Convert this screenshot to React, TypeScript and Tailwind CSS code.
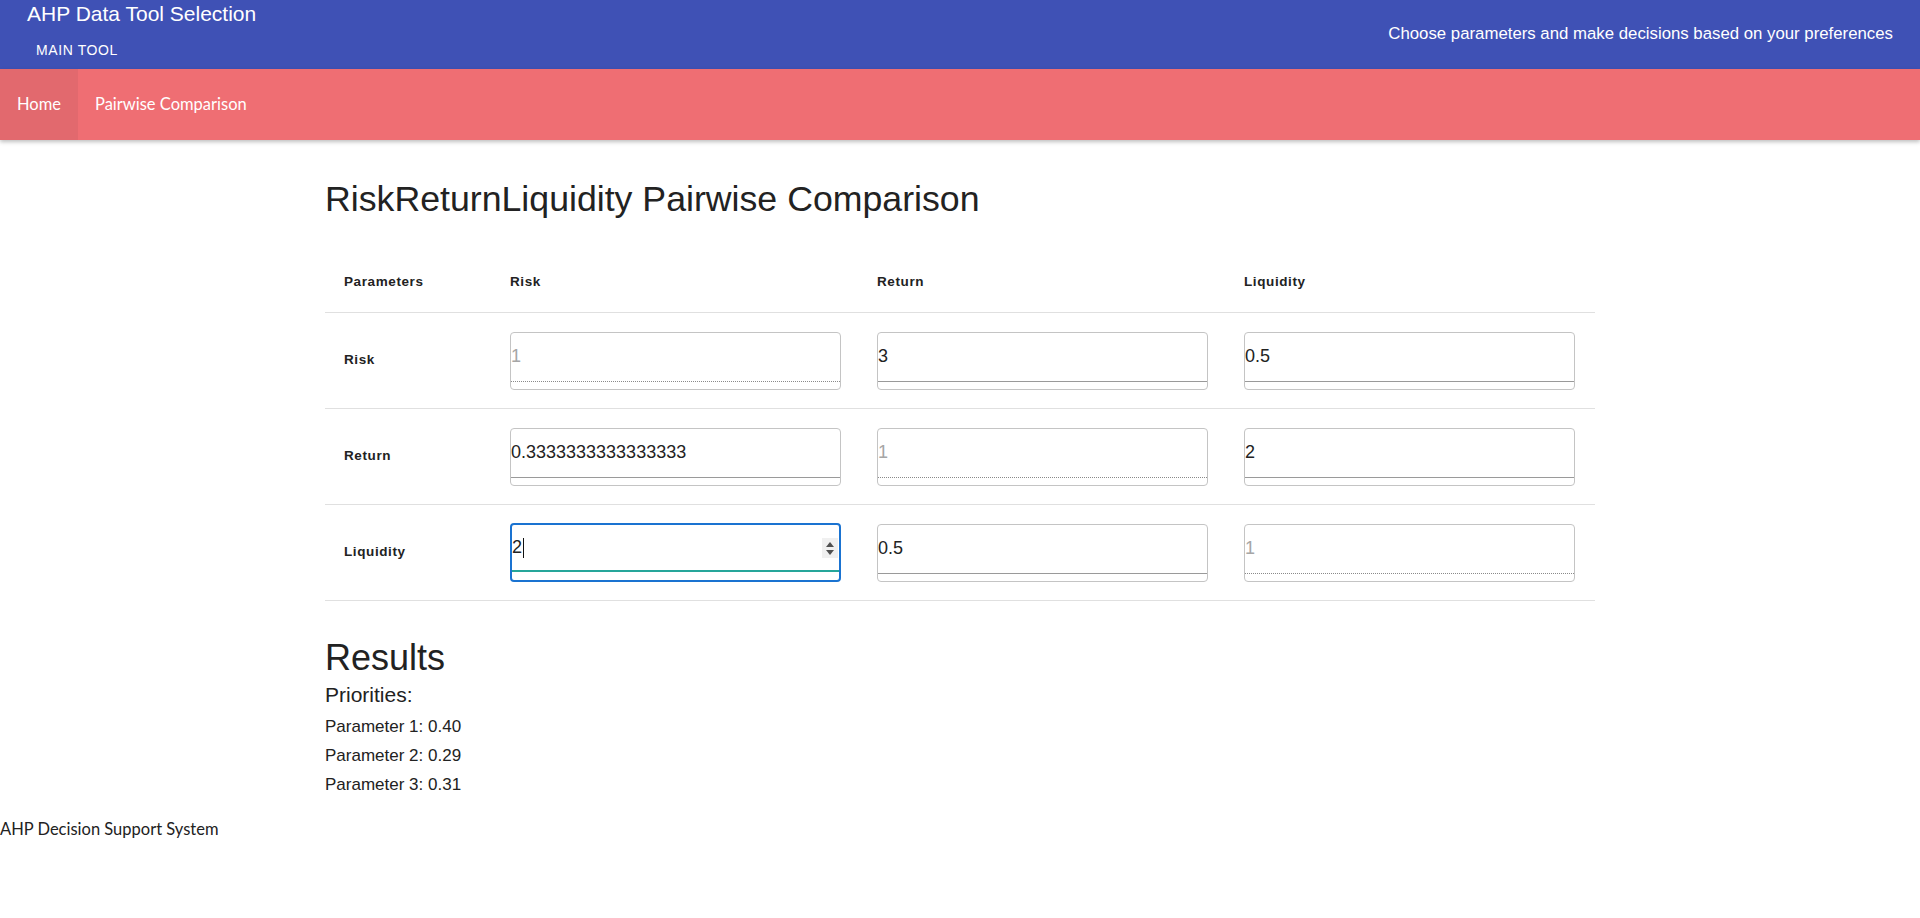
import { useState } from 'react';

const params = ['Risk', 'Return', 'Liquidity'];

const initialMatrix = [
  ['1', '3', '0.5'],
  ['0.3333333333333333', '1', '2'],
  ['2', '0.5', '1'],
];

function Spinner() {
  return (
    <div className="absolute right-[1px] top-[13px] flex h-[20px] w-[16px] flex-col items-center justify-center gap-[3px] bg-[#f0f0f0]">
      <svg width="8" height="5" viewBox="0 0 8 5">
        <path d="M0 5 L4 0 L8 5 Z" fill="#505050" />
      </svg>
      <svg width="8" height="5" viewBox="0 0 8 5">
        <path d="M0 0 L4 5 L8 0 Z" fill="#505050" />
      </svg>
    </div>
  );
}

function MatrixCell({ value, diagonal, focused }: { value: string; diagonal: boolean; focused: boolean }) {
  if (focused) {
    return (
      <div className="relative h-[59px] w-[331px] rounded-[4px] border-2 border-[#1a73d1]">
        <div className="relative flex h-[47px] items-center border-b-2 border-[#26a69a]">
          <span className="text-[18px] text-[#222] [font-family:'Liberation_Sans',Arial,sans-serif]">{value}</span>
          <span className="ml-[1px] h-[20px] w-[1px] bg-[#111]" />
          <Spinner />
        </div>
      </div>
    );
  }
  return (
    <div className="h-[58px] w-[331px] rounded-[4px] border border-[#c4c4c4]">
      <input
        readOnly
        disabled={diagonal}
        defaultValue={value}
        className={`block h-[49px] w-full bg-transparent p-0 text-[18px] outline-none [font-family:'Liberation_Sans',Arial,sans-serif] ${
          diagonal ? 'border-b border-dotted border-[#8a8a8a] text-[#a6a6a6]' : 'border-b border-[#9a9a9a] text-[#222]'
        }`}
      />
    </div>
  );
}

export default function App() {
  const [matrix] = useState(initialMatrix);
  const priorities = ['0.40', '0.29', '0.31'];

  return (
    <div className="min-h-screen bg-white [font-family:'Liberation_Sans',Arial,sans-serif]">
      {/* Top bar */}
      <header className="flex h-[69px] justify-between bg-[#3f51b5] px-[27px] text-white">
        <div className="pt-[4px]">
          <div className="text-[21px] leading-[20px]">AHP Data Tool Selection</div>
          <div className="ml-[9px] mt-[19px] text-[14px] leading-[14px] tracking-[0.6px]">MAIN TOOL</div>
        </div>
        <div className="pt-[24px] text-[16.8px] leading-[20px]">
          Choose parameters and make decisions based on your preferences
        </div>
      </header>

      {/* Nav */}
      <nav className="relative flex h-[71px] bg-[#ef6e73] text-[16.5px] text-white shadow-[0_2px_4px_rgba(0,0,0,0.25)] [font-family:'Segoe_UI',Lato,sans-serif]">
        <a href="#" className="flex items-center bg-[#e2696e] px-[17px]">
          Home
        </a>
        <a href="#" className="flex items-center px-[17px]">
          Pairwise Comparison
        </a>
      </nav>

      <main className="mx-auto w-[1270px] text-[#222]">
        <h1 className="mt-[39px] text-[35.7px] leading-[40px]">RiskReturnLiquidity Pairwise Comparison</h1>

        {/* Comparison table */}
        <div className="mt-[34px] grid grid-cols-[169px_367px_367px_367px]">
          <div className="flex h-[60px] items-center border-b border-[#e0e0e0] pl-[19px] text-[13.5px] font-bold tracking-[0.6px]">
            Parameters
          </div>
          {params.map((p) => (
            <div
              key={p}
              className="flex h-[60px] items-center border-b border-[#e0e0e0] pl-[16px] text-[13.5px] font-bold tracking-[0.6px]"
            >
              {p}
            </div>
          ))}
          {params.map((rowName, i) => (
            <div key={rowName} className="contents">
              <div className="flex h-[96px] items-center border-b border-[#e0e0e0] pl-[19px] text-[13.5px] font-bold tracking-[0.6px]">
                {rowName}
              </div>
              {matrix[i].map((val, j) => (
                <div key={j} className="flex h-[96px] items-center border-b border-[#e0e0e0] pl-[16px]">
                  <MatrixCell value={val} diagonal={i === j} focused={i === 2 && j === 0} />
                </div>
              ))}
            </div>
          ))}
        </div>

        {/* Results */}
        <h2 className="mt-[37px] text-[36px] leading-[40px]">Results</h2>
        <h3 className="mt-[5px] text-[21px] leading-[24px]">Priorities:</h3>
        <div className="mt-[5px] text-[17px] leading-[29px]">
          {priorities.map((p, i) => (
            <p key={i}>
              Parameter {i + 1}: {p}
            </p>
          ))}
        </div>
      </main>

      <footer className="mt-[18px] text-[16.5px] leading-[24px] text-[#222] [font-family:'Segoe_UI',Lato,sans-serif]">
        AHP Decision Support System
      </footer>
    </div>
  );
}
